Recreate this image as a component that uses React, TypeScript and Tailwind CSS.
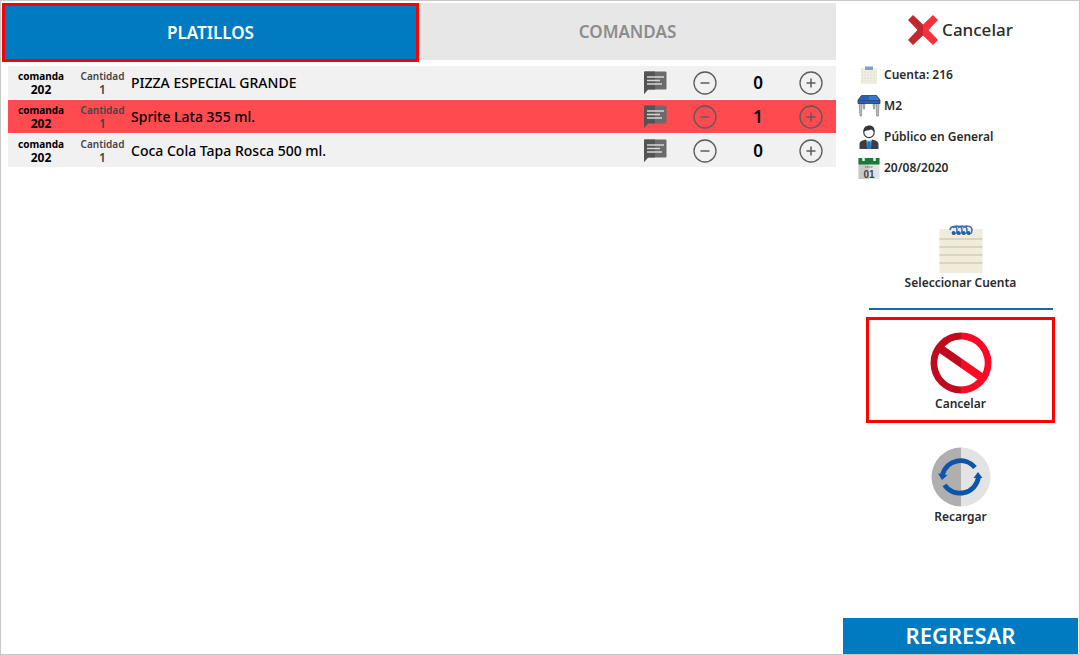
import { useState } from "react";
import clsx from "clsx";

interface Dish {
  id: number;
  comanda: number;
  cantidad: number;
  name: string;
  cancelled: number;
}

const initialDishes: Dish[] = [
  { id: 1, comanda: 202, cantidad: 1, name: "PIZZA ESPECIAL GRANDE", cancelled: 0 },
  { id: 2, comanda: 202, cantidad: 1, name: "Sprite Lata 355 ml.", cancelled: 1 },
  { id: 3, comanda: 202, cantidad: 1, name: "Coca Cola Tapa Rosca 500 ml.", cancelled: 0 },
];

const CommentIcon = () => (
  <svg width="24" height="24" viewBox="0 0 24 24">
    <path d="M2 .5H22.500a1 1 0 0 1 1 1V17.500a1 1 0 0 1-1 1H5L1 23V1.500a1 1 0 0 1 1-1Z" fill="#6b6b6b" />
    <path d="M2 .5H12V18.500H5L1 23V1.500a1 1 0 0 1 1-1Z" fill="#545454" />
    <path d="M4 6H21M4 9.500H17M4 13H19" stroke="#d6d6d6" strokeWidth="1.500" />
  </svg>
);

const CircleIcon = ({ plus = false }: { plus?: boolean }) => (
  <svg width="24" height="24" viewBox="0 0 24 24" fill="none" stroke="#5c5c5c">
    <circle cx="12" cy="12" r="11" strokeWidth="1.3" />
    <path d={plus ? "M7.5 12H16.5M12 7.5V16.5" : "M7.5 12H16.5"} strokeWidth="1.5" />
  </svg>
);

const CrossIcon = () => (
  <svg width="30" height="30" viewBox="0 0 30 30">
    <path d="M5 0 15 9.5V20.5L5 30 0 25 9.5 15 0 5Z" fill="#c1272d" />
    <path d="M25 0 15 9.5V20.5L25 30 30 25 20.5 15 30 5Z" fill="#f9303c" />
  </svg>
);

const NoteIcon = ({ size }: { size: number }) => (
  <svg width={size} height={size} viewBox="0 0 48 48">
    <rect x="2.5" y="4" width="43" height="44" fill="#efecdc" />
    <path d="M2.5 14H45.5M2.5 22H45.5M2.5 30H45.5M2.5 38H45.5" stroke="#d2cbb0" strokeWidth="1.5" />
    <g fill="none" stroke="#3d72b8" strokeWidth="1.6">
      <path d="M13 5C14 0 20 .5 20 5S17 9 16 8.5" />
      <path d="M16 3C18 0 25 .5 25 5S22 9 21 8.5" />
      <path d="M21 3C23 0 30 .5 30 5S27 9 26 8.5" />
      <path d="M26 3C28 0 35 .5 35 5S32 9 31 8.5" />
    </g>
    <g fill="#2a5ba3">
      <circle cx="16.5" cy="8" r="1.9" />
      <circle cx="21.5" cy="8" r="1.9" />
      <circle cx="26.5" cy="8" r="1.9" />
      <circle cx="31.5" cy="8" r="1.9" />
    </g>
  </svg>
);

const SmallNoteIcon = () => (
  <svg width="18" height="18" viewBox="0 0 18 18">
    <rect x="1" y="2" width="16" height="16" fill="#f1eedf" />
    <path d="M1 6H17M1 9H17M1 12H17M1 15H17" stroke="#dfd9c1" strokeWidth=".8" strokeDasharray="2 1" />
    <path d="M5 2H13" stroke="#7d9fd0" strokeWidth="3" />
    <path d="M5.500 3.500H12.500" stroke="#4f7dbd" strokeWidth="1" strokeDasharray="1 1" />
  </svg>
);

const TableIcon = () => (
  <svg width="24" height="24" viewBox="0 0 24 24">
    <path d="M2 9H5L4.5 22H3ZM19 9H22L21.5 22H19.5ZM6 9H8L7.500 15H6.500ZM16 9H18L17.500 15H16.500Z" fill="#b9bcc0" stroke="#74777c" strokeWidth=".6" />
    <path d="M4.500 1.500H19.500L23 6V9.500H1V6Z" fill="#2c5fae" stroke="#2d3c55" strokeWidth=".8" />
    <path d="M12 2H19L22 6H12Z" fill="#3f76c4" />
    <path d="M1 6.500H23" stroke="#254b86" strokeWidth=".8" />
  </svg>
);

const PersonIcon = () => (
  <svg width="24" height="24" viewBox="0 0 24 24">
    <path d="M2.500 24V19C2.500 16.500 5 15.500 8.500 14.500L12 18 15.500 14.500C19 15.500 21.500 16.500 21.500 19V24Z" fill="#3a3d42" />
    <path d="M9.500 14.500 12 16.500 14.500 14.500 14 24H10Z" fill="#7fb2e6" />
    <path d="M10.500 16.500H13.500L14 24H10Z" fill="#1f74c9" />
    <circle cx="12" cy="7.500" r="5.200" fill="#fff" stroke="#3a3d42" strokeWidth="1.200" />
    <path d="M6.500 7C6 2.500 9 .5 12.500 .5 16 .5 18 3 17.500 7 16.500 5.500 15.500 5 14 4.500 11 6 8.500 5 6.500 7Z" fill="#33363b" />
  </svg>
);

const CalendarIcon = () => (
  <svg width="24" height="24" viewBox="0 0 24 24">
    <rect x="1.500" y="2" width="21" height="21" fill="#e4e4e4" />
    <path d="M1.500 2H12V23H1.500Z" fill="#c9c9c9" />
    <path d="M1.500 2H22.500V8.500H1.500Z" fill="#1b7a35" />
    <path d="M6.500 0V5M17.500 0V5" stroke="#f2f2f2" strokeWidth="2.500" />
    <path d="M8 11H16" stroke="#6d6d6d" strokeWidth="1.200" strokeDasharray="1.500 .5" />
    <text x="12" y="21.500" textAnchor="middle" fontSize="10" fontWeight="700" fontFamily="Liberation Sans, sans-serif" fill="#444">
      01
    </text>
  </svg>
);

const ForbiddenIcon = () => (
  <svg width="62" height="62" viewBox="0 0 62 62">
    <path d="M31 .5A30.500 30.500 0 0 0 31 61.500V54.500A23.500 23.500 0 0 1 9.500 21L31 36V26L14.500 14.500A23.500 23.500 0 0 1 31 7.500Z" fill="#c00a1e" />
    <path d="M31 .5A30.500 30.500 0 0 1 31 61.500V54.500A23.500 23.500 0 0 0 47.500 47.500L31 36V26L52.500 41A23.500 23.500 0 0 0 31 7.500Z" fill="#fb0a25" />
  </svg>
);

const ReloadIcon = () => (
  <svg width="60" height="60" viewBox="0 0 60 60">
    <path d="M30 .5A29.500 29.500 0 0 0 30 59.500Z" fill="#afafaf" />
    <path d="M30 .5A29.500 29.500 0 0 1 30 59.500Z" fill="#e3e3e3" />
    <g fill="none" stroke="#0b55ab" strokeWidth="4.800">
      <path d="M44 20.500A18.700 18.700 0 0 0 11.500 27.500" />
      <path d="M13.500 38A18.700 18.700 0 0 0 47.500 30" />
    </g>
    <path d="M7 26.500 16.500 28 11 33ZM42.500 31 51.500 31 47 25Z" fill="#0b55ab" />
  </svg>
);

const info = [
  { icon: <SmallNoteIcon />, text: "Cuenta: 216" },
  { icon: <TableIcon />, text: "M2" },
  { icon: <PersonIcon />, text: "Público en General" },
  { icon: <CalendarIcon />, text: "20/08/2020" },
];

const App = () => {
  const [tab, setTab] = useState("PLATILLOS");
  const [dishes, setDishes] = useState(initialDishes);

  const change = (id: number, step: number) =>
    setDishes((list) =>
      list.map((d) =>
        d.id === id
          ? { ...d, cancelled: Math.min(d.cantidad, Math.max(0, d.cancelled + step)) }
          : d
      )
    );

  return (
    <div className="flex min-h-screen border border-[#c8c8c8] bg-white font-['Noto_Sans',sans-serif] text-black">
      <main className="flex-1 pt-[2px] pl-px">
        <div className="flex h-[60px] items-start">
          {["PLATILLOS", "COMANDAS"].map((name) => (
            <button
              key={name}
              type="button"
              onClick={() => setTab(name)}
              className={clsx(
                "w-1/2 text-[17px] font-semibold",
                tab === name
                  ? "h-[59px] border-3 border-[#ff0000] bg-[#007ac1] text-white"
                  : "h-[57px] bg-[#e7e7e7] text-[#8c8c8c]"
              )}
            >
              {name}
            </button>
          ))}
        </div>

        <div className="pt-[2px] pl-[6px]">
          <table className="w-full table-fixed border-separate border-spacing-x-0 border-spacing-y-px">
            <colgroup>
              <col className="w-[66px]" />
              <col className="w-[57px]" />
              <col />
              <col className="w-[50px]" />
              <col className="w-[50px]" />
              <col className="w-[56px]" />
              <col className="w-[50px]" />
            </colgroup>
            <tbody>
              {dishes.map((dish) => (
                <tr
                  key={dish.id}
                  className={clsx("h-[33px]", dish.cancelled > 0 ? "bg-[#ff4a4f]" : "bg-[#f1f1f1]")}
                >
                  <td className="p-0 text-center text-[10px] leading-[13px] font-bold">
                    comanda
                    <span className="block text-xs leading-[13px]">{dish.comanda}</span>
                  </td>
                  <td className="p-0 text-center text-[10px] leading-[13px] font-semibold text-[#444]">
                    Cantidad
                    <span className="block text-xs leading-[13px]">{dish.cantidad}</span>
                  </td>
                  <td className="truncate p-0 text-sm font-medium">{dish.name}</td>
                  <td className="p-0">
                    <button type="button" aria-label="Comentario" className="mx-auto block">
                      <CommentIcon />
                    </button>
                  </td>
                  <td className="p-0">
                    <button
                      type="button"
                      aria-label="Quitar"
                      className="mx-auto block"
                      onClick={() => change(dish.id, -1)}
                    >
                      <CircleIcon />
                    </button>
                  </td>
                  <td className="p-0 text-center text-[17px] leading-5 font-semibold">{dish.cancelled}</td>
                  <td className="p-0">
                    <button
                      type="button"
                      aria-label="Agregar"
                      className="mx-auto block"
                      onClick={() => change(dish.id, 1)}
                    >
                      <CircleIcon plus />
                    </button>
                  </td>
                </tr>
              ))}
            </tbody>
          </table>
        </div>
      </main>

      <aside className="flex w-[243px] shrink-0 flex-col pr-px pl-[7px] text-xs font-semibold text-[#2b2b2b]">
        <h1 className="flex h-[58px] items-center justify-center gap-1 text-[17px] font-medium">
          <CrossIcon />
          Cancelar
        </h1>

        <ul className="pl-[14px]">
          {info.map((item) => (
            <li key={item.text} className="flex h-[31px] items-center gap-[3px]">
              <span className="flex w-6 justify-center">{item.icon}</span>
              {item.text}
            </li>
          ))}
        </ul>

        <div className="flex flex-col items-center px-[23px] pt-[42px]">
          <button type="button" className="flex w-full flex-col items-center gap-[2px]">
            <NoteIcon size={48} />
            Seleccionar Cuenta
          </button>
          <hr className="mt-[17px] mb-[7px] w-[184px] border-t-2 border-[#0f6ab4]" />
          <button
            type="button"
            className="flex h-[106px] w-full flex-col items-center gap-[2px] border-3 border-[#ff0000] pt-3"
          >
            <ForbiddenIcon />
            Cancelar
          </button>
          <button type="button" className="mt-6 flex w-full flex-col items-center gap-[2px]">
            <ReloadIcon />
            Recargar
          </button>
        </div>

        <button type="button" className="mt-auto h-9 bg-[#007ac1] text-[22px] font-semibold text-white">
          REGRESAR
        </button>
      </aside>
    </div>
  );
};

export default App;
